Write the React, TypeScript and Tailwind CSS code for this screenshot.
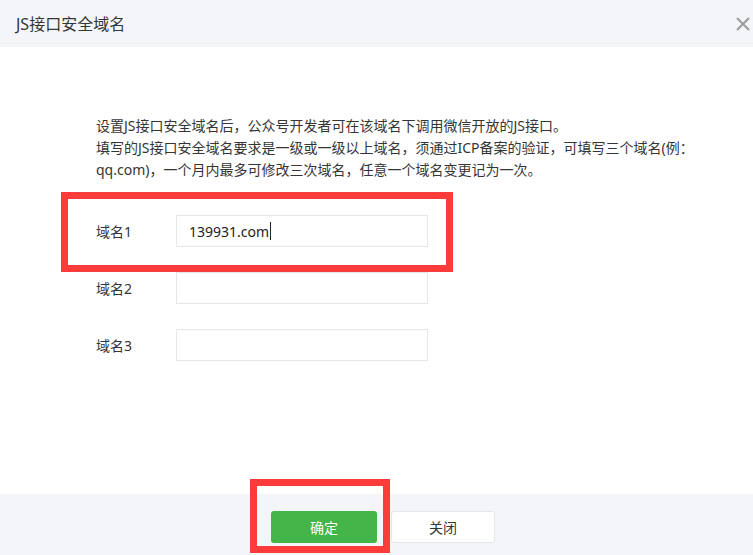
import type { ReactNode } from "react";

// label + fake input row
const Row = ({ label, children }: { label: string; children?: ReactNode }) => {
  return (
    <div className="flex items-center h-[32px]">
      <div className="w-[80px] text-[14px] text-[#353535]">{label}</div>
      <div className="w-[252px] h-[32px] border border-[#e4e6eb] bg-white flex items-center pl-[12px] text-[14px] text-[#222]">
        {children}
      </div>
    </div>
  );
};

export default function App() {
  return (
    <div className="relative w-[753px] h-[555px] flex flex-col bg-white overflow-hidden font-['Noto_Sans','Noto_Sans_CJK_SC',sans-serif]">
      <div className="h-[47px] bg-[#f4f5f9] flex items-center justify-between pl-[16px] pr-[3px]">
        <span className="text-[16px] text-[#353535]">JS接口安全域名</span>
        <svg width="14" height="14" viewBox="0 0 14 14" className="mr-0">
          <path d="M1 1 L13 13 M13 1 L1 13" stroke="#9b9b9b" strokeWidth="2" />
        </svg>
      </div>

      <div className="flex-1 pl-[96px] pt-[68px]">
        <p className="text-[14px] leading-[22px] text-[#353535] whitespace-nowrap">
          设置JS接口安全域名后，公众号开发者可在该域名下调用微信开放的JS接口。
          <br />
          填写的JS接口安全域名要求是一级或一级以上域名，须通过ICP备案的验证，可填写三个域名(例：
          <br />
          qq.com)，一个月内最多可修改三次域名，任意一个域名变更记为一次。
        </p>

        <div className="mt-[34px] flex flex-col gap-[25px]">
          <Row label="域名1">
            <span>139931.com</span>
            <span className="w-px h-[18px] bg-[#222] ml-px" />
          </Row>
          <Row label="域名2" />
          <Row label="域名3" />
        </div>
      </div>

      <div className="h-[61px] bg-[#f4f5f9] flex justify-center gap-[14px] pt-[17px] pl-[13px]">
        <button className="w-[106px] h-[32px] rounded-[3px] bg-[#44b549] text-white text-[14px]">确定</button>
        <button className="w-[104px] h-[32px] rounded-[3px] bg-white border border-[#e4e8eb] text-[#353535] text-[14px]">
          关闭
        </button>
      </div>

      {/* annotation boxes */}
      <div className="absolute left-[61px] top-[192px] w-[392px] h-[80px] border-[7px] border-[#fc3b3b]" />
      <div className="absolute left-[250px] top-[479px] w-[140px] h-[74px] border-[7px] border-[#fc3b3b]" />
    </div>
  );
}
